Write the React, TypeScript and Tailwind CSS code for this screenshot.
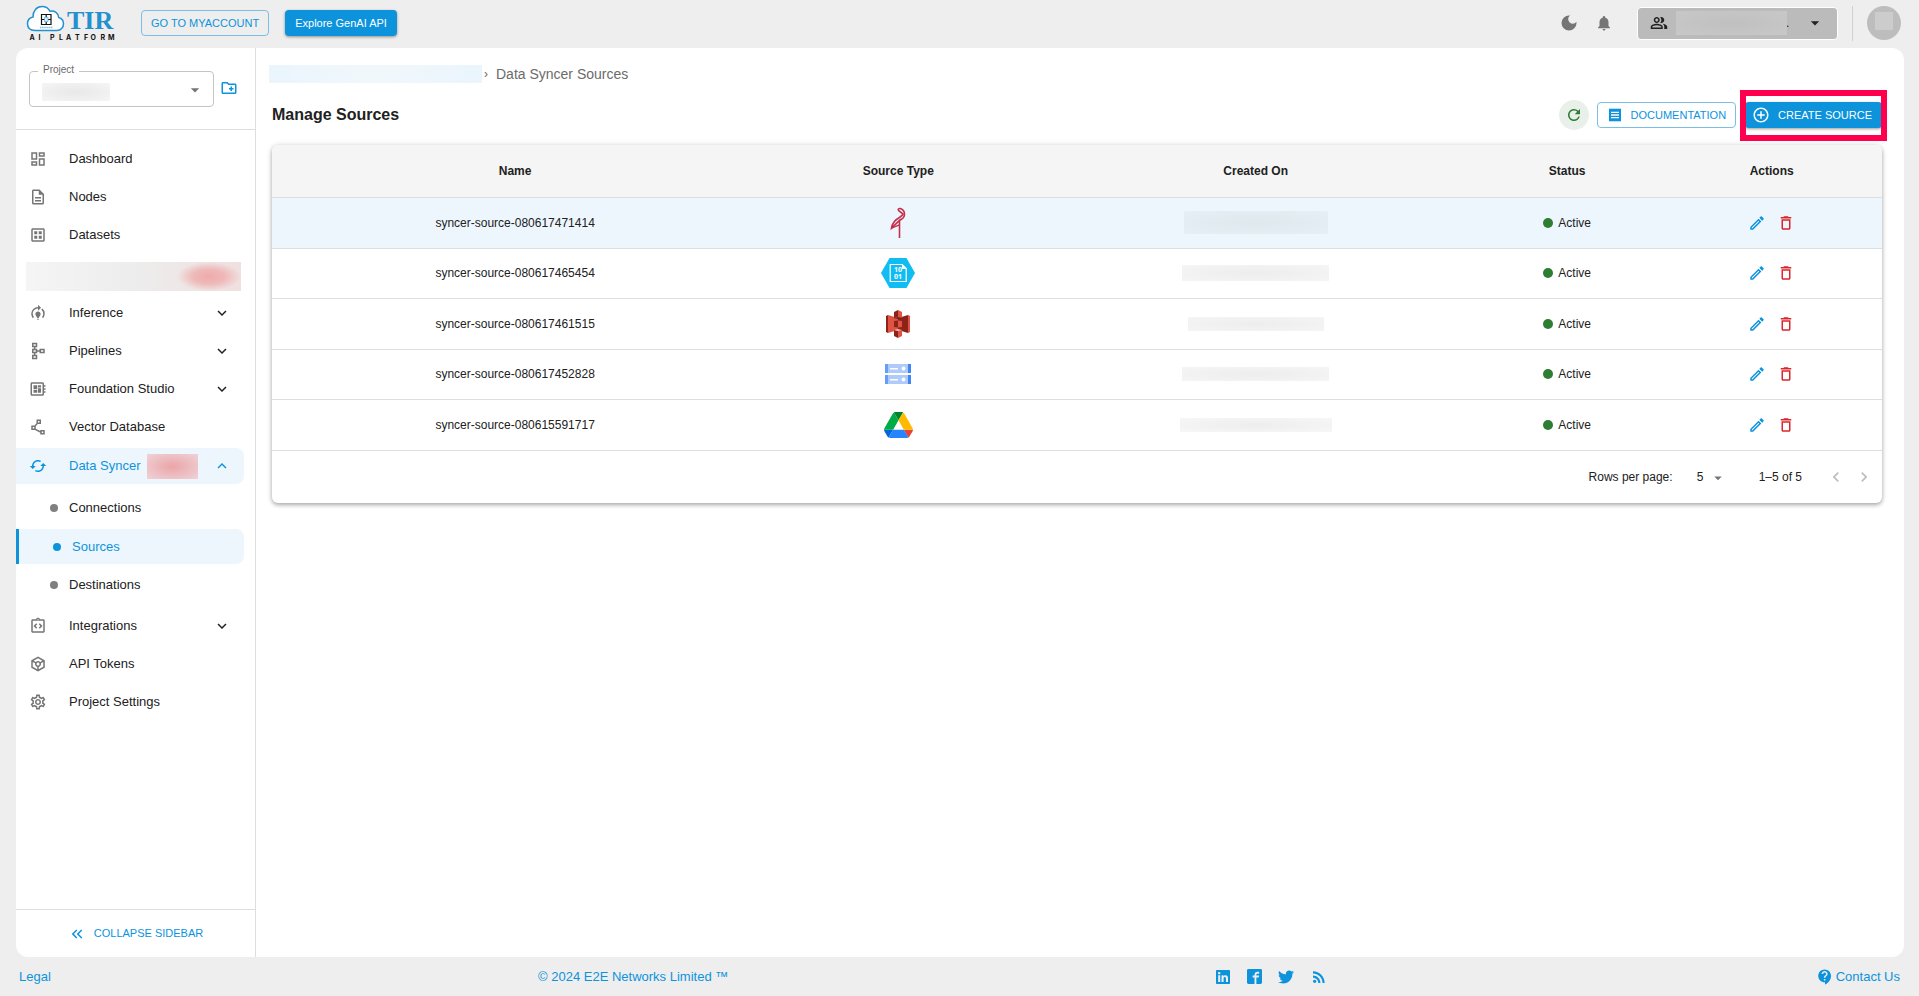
import { useState, type ReactNode } from "react";
import type { IconType } from "react-icons";
import {
    MdAddCircleOutline,
    MdArrowDropDown,
    MdCached,
    MdChevronLeft,
    MdChevronRight,
    MdContactSupport,
    MdDarkMode,
    MdDeleteOutline,
    MdExpandLess,
    MdExpandMore,
    MdKeyboardDoubleArrowLeft,
    MdNotifications,
    MdOutlineCreateNewFolder,
    MdOutlineDashboard,
    MdOutlineDataset,
    MdOutlineDescription,
    MdOutlineDeveloperBoard,
    MdOutlineEdit,
    MdOutlineIntegrationInstructions,
    MdOutlineModelTraining,
    MdOutlinePeopleAlt,
    MdOutlinePolyline,
    MdOutlineSchema,
    MdOutlineSettings,
    MdOutlineToken,
    MdReceipt,
    MdRefresh,
    MdRssFeed,
} from "react-icons/md";
import { FaLinkedin, FaTwitter } from "react-icons/fa";
import { ImFacebook2 } from "react-icons/im";

function Logo() {
    return (
        <svg viewBox="0 0 90 36" className="h-9 w-[90px]" role="img" aria-label="TIR AI Platform">
            <path
                d="M9 25.500C4 25.500 1.500 22.500 1.500 18.500c0-3.500 2.400-6 5.500-6.600C7 6 10.500 1.500 16 1.500c4 0 6.500 1.800 8 4.800 4.500-1 8.500 1.700 8.700 6.200 3 .8 4.800 3.200 4.800 6.300 0 3.700-2.600 6.700-6.500 6.700z"
                fill="#fff"
                stroke="#2490cf"
                strokeWidth="1.500"
            />
            <g fill="none" stroke="#111" strokeWidth="1.200">
                <path d="M15.500 9.500H25v10h-9.500zM15.500 14.500H25M20.200 9.500v3M20.200 16.500v3" />
            </g>
            <path d="M18.500 12.300H22v4.400h-3.500z" fill="#d8eefb" stroke="#5aaede" strokeWidth=".8" />
            <path d="M14 22.500h13" stroke="#7dbce2" strokeWidth="1.500" strokeDasharray="1.500 .6" />
            <text x="41" y="24" fontFamily="Liberation Serif, serif" fontWeight="700" fontSize="26" fill="#2490cf">
                TIR
            </text>
            <text
                x="3.500 12.500 24 33 40 49 58 64.500 74.500 82"
                y="35"
                fontFamily="Inter, sans-serif"
                fontWeight="700"
                fontSize="7"
                fill="#111"
            >
                AIPLATFORM
            </text>
        </svg>
    );
}

function MinioIcon() {
    return (
        <svg viewBox="0 0 16 32" className="h-8 w-4" fill="none" stroke="#c5304c" strokeWidth="1.600">
            <path d="M9.500 31V13.500L1.500 21.200c.6-4.200 3.500-8.400 8-10.700l2.900-2.300C13.300 7.300 12.500 6.500 11.700 6L8.700 3.700C7.500 2.500 8.700 1.200 10.300 1.600c2.600.8 4.300 3.600 4.200 6.200-.1 2.700-2.200 4.300-5 5.700" />
            <path d="M1.500 21.200l8-3.400" strokeWidth="1.300" />
        </svg>
    );
}

function AzureBlobIcon() {
    return (
        <svg viewBox="0 0 34 30" className="h-[30px] w-[34px]">
            <path d="M8.500 0h17L34 15l-8.500 15h-17L0 15z" fill="#0fbdf2" />
            <path d="M9.200 6.500h12l4 4v13H9.200z" fill="none" stroke="#fff" strokeWidth="1.200" />
            <path d="M21 6v5h5z" fill="#fff" />
            <text x="13" y="13.500" fontSize="7" fontWeight="700" fontFamily="Open Sans, sans-serif" fill="#fff">
                10
            </text>
            <text x="13" y="21" fontSize="7" fontWeight="700" fontFamily="Open Sans, sans-serif" fill="#fff">
                01
            </text>
        </svg>
    );
}

function S3Icon() {
    return (
        <svg viewBox="0 0 24 28" className="h-7 w-6">
            <path d="M0 6l2-1v18l-2-1z" fill="#8c2318" />
            <path d="M2 5l10 3v12L2 23z" fill="#e05243" />
            <path d="M24 6l-2-1v18l2-1z" fill="#e05243" />
            <path d="M22 5L12 8v12l10 3z" fill="#8c2318" />
            <path d="M12 0L8 2v6l4-1z" fill="#8c2318" />
            <path d="M12 0l4 2v6l-4-1z" fill="#e05243" />
            <path d="M8 8l4-1 4 1-4 1z" fill="#5e1f18" />
            <path d="M12 28l-4-2v-6l4 1z" fill="#8c2318" />
            <path d="M12 28l4-2v-6l-4 1z" fill="#e05243" />
            <path d="M8 20l4 1 4-1-4-1z" fill="#f2b0a9" />
            <path d="M8 11l4-.6v7.200L8 17z" fill="#8c2318" />
            <path d="M16 11l-4-.6v7.200l4-.6z" fill="#e05243" />
        </svg>
    );
}

function FilestoreIcon() {
    return (
        <svg viewBox="0 0 26 22" className="h-[22px] w-[26px]">
            {[1, 12].map((y) => (
                <g key={y}>
                    <path d={`M0 ${y}h26v9h-26z`} fill="#aecbfa" />
                    <path d={`M0 ${y}h3v9h-3z`} fill="#669df6" />
                    <path d={`M23 ${y}h3v9h-3z`} fill="#4285f4" />
                    <path d={`M5 ${y + 4}h8v1.500h-8z`} fill="#fff" />
                    <circle cx="18.500" cy={y + 4.5} r="1.900" fill="#fff" />
                </g>
            ))}
        </svg>
    );
}

function DriveIcon() {
    return (
        <svg viewBox="0 0 87.3 78" className="h-[26px] w-[29px]">
            <path d="m6.600 66.850 3.850 6.650c.8 1.400 1.950 2.500 3.300 3.300l13.750-23.800h-27.500c0 1.550.4 3.100 1.200 4.500z" fill="#0066da" />
            <path d="m43.650 25-13.750-23.800c-1.350.8-2.500 1.900-3.300 3.300l-25.400 44a9.060 9.060 0 0 0 -1.200 4.500h27.500z" fill="#00ac47" />
            <path d="m73.550 76.800c1.350-.8 2.500-1.900 3.300-3.300l1.600-2.750 7.650-13.250c.8-1.400 1.200-2.950 1.200-4.500h-27.502l5.852 11.500z" fill="#ea4335" />
            <path d="m43.650 25 13.750-23.800c-1.350-.8-2.900-1.200-4.500-1.200h-18.500c-1.600 0-3.150.45-4.500 1.200z" fill="#00832d" />
            <path d="m59.800 53h-32.300l-13.750 23.800c1.350.8 2.900 1.200 4.500 1.200h50.800c1.600 0 3.150-.45 4.500-1.200z" fill="#2684fc" />
            <path d="m73.400 26.500-12.700-22c-.8-1.400-1.950-2.500-3.300-3.300l-13.750 23.800 16.150 28h27.450c0-1.550-.4-3.100-1.200-4.500z" fill="#ffba00" />
        </svg>
    );
}

const sources = [
    { name: "syncer-source-080617471414", icon: <MinioIcon />, blob: "h-[23px] w-36 from-[#dfe8ed] to-[#e6eff5]" },
    { name: "syncer-source-080617465454", icon: <AzureBlobIcon />, blob: "h-4 w-[147px] from-[#ededed] to-[#f5f5f5]" },
    { name: "syncer-source-080617461515", icon: <S3Icon />, blob: "h-3.5 w-[136px] from-[#ededed] to-[#f5f5f5]" },
    { name: "syncer-source-080617452828", icon: <FilestoreIcon />, blob: "h-3.5 w-[147px] from-[#ededed] to-[#f5f5f5]" },
    { name: "syncer-source-080615591717", icon: <DriveIcon />, blob: "h-3.5 w-[152px] from-[#ededed] to-[#f7f7f7]" },
];

type NavItemProps = {
    icon: IconType;
    label: string;
    open?: boolean;
    expandable?: boolean;
    children?: ReactNode;
};

function NavItem({ icon: Icon, label, open, expandable, children }: NavItemProps) {
    const inner = (
        <>
            <Icon className={`size-[18px] shrink-0 ${open ? "" : "text-[#757575]"}`} />
            <span className="ml-[22px]">{label}</span>
            {children}
            {expandable && (open ? <MdExpandLess className="ml-auto size-[18px]" /> : <MdExpandMore className="ml-auto size-[18px]" />)}
        </>
    );
    if (expandable) {
        return (
            <button
                type="button"
                aria-expanded={!!open}
                className={`flex w-full items-center rounded-r-lg px-[13px] text-left ${open ? "my-0.5 h-9 bg-[#edf6fd] text-[#0c93dc]" : "h-[38px]"}`}
            >
                {inner}
            </button>
        );
    }
    return (
        <a href="#" className="flex h-[38px] items-center rounded-r-lg px-[13px]">
            {inner}
        </a>
    );
}

function SubItem({ label, active }: { label: string; active?: boolean }) {
    return (
        <a
            href="#"
            className={`flex items-center rounded-r-lg pl-[34px] ${active ? "my-0.5 h-[35px] border-l-3 border-[#0c93dc] bg-[#edf6fd] text-[#0c93dc]" : "h-[38px]"}`}
        >
            <span className={`size-2 rounded-full ${active ? "bg-[#0c93dc]" : "bg-[#808080]"}`} />
            <span className="ml-[11px]">{label}</span>
        </a>
    );
}

function Sidebar() {
    return (
        <aside className="flex w-60 shrink-0 flex-col border-r border-[#dedede]">
            <div className="flex h-[82px] items-start border-b border-[#dedede] pt-[23px] pl-[13px]">
                <div className="relative h-9 w-[185px] rounded border border-[#c4c4c4]">
                    <label htmlFor="project" className="absolute -top-2 left-2 bg-white px-[5px] text-[10px] leading-3 text-[#6b6b6b]">
                        Project
                    </label>
                    <select id="project" className="h-full w-full appearance-none bg-transparent outline-none">
                        <option value="" />
                    </select>
                    <span className="pointer-events-none absolute top-[11px] left-3 h-[18px] w-[68px] bg-radial from-[#e8e8e8] to-[#f5f5f5]" />
                    <MdArrowDropDown className="pointer-events-none absolute top-2 right-2 size-5 text-[#757575]" />
                </div>
                <button type="button" aria-label="Create project" className="mt-2 ml-1.5 text-[#0c93dc]">
                    <MdOutlineCreateNewFolder className="size-[18px]" />
                </button>
            </div>

            <nav className="flex flex-col pt-2.5 pr-[11px] text-[13px]">
                <NavItem icon={MdOutlineDashboard} label="Dashboard" />
                <NavItem icon={MdOutlineDescription} label="Nodes" />
                <NavItem icon={MdOutlineDataset} label="Datasets" />
                <div className="mt-2 mr-[3px] mb-[3px] ml-2.5 flex h-[29px] bg-linear-to-r from-[#f5f5f5] via-[#ededed] to-[#f0e0e0]">
                    <div className="ml-auto w-16 bg-radial-[closest-side] from-[#efabab] via-[#efb9b9] to-transparent" />
                </div>
                <NavItem icon={MdOutlineModelTraining} label="Inference" expandable />
                <NavItem icon={MdOutlineSchema} label="Pipelines" expandable />
                <NavItem icon={MdOutlineDeveloperBoard} label="Foundation Studio" expandable />
                <NavItem icon={MdOutlinePolyline} label="Vector Database" />
                <NavItem icon={MdCached} label="Data Syncer" expandable open>
                    <span className="ml-1.5 h-[25px] w-[51px] bg-radial from-[#eaa5a8] to-[#eed3d8]" />
                </NavItem>
                <div className="my-[3px]">
                    <SubItem label="Connections" />
                    <SubItem label="Sources" active />
                    <SubItem label="Destinations" />
                </div>
                <NavItem icon={MdOutlineIntegrationInstructions} label="Integrations" expandable />
                <NavItem icon={MdOutlineToken} label="API Tokens" />
                <NavItem icon={MdOutlineSettings} label="Project Settings" />
            </nav>

            <button
                type="button"
                className="mt-auto flex h-12 items-center justify-center gap-2 border-t border-[#dedede] text-[11px] text-[#0c93dc]"
            >
                <MdKeyboardDoubleArrowLeft className="size-[18px]" />
                COLLAPSE SIDEBAR
            </button>
        </aside>
    );
}

function SourcesTable() {
    const [rows, setRows] = useState("5");

    return (
        <div className="mt-[15px] overflow-hidden rounded-md shadow-[0_2px_4px_rgba(0,0,0,0.3),0_0_6px_rgba(0,0,0,0.1)]">
            <table className="w-full table-fixed text-center text-xs">
                <thead className="bg-[#f5f5f5]">
                    <tr className="h-[52px] border-b border-[#dedede]">
                        <th className="w-[30.2%]">Name</th>
                        <th className="w-[17.4%]">Source Type</th>
                        <th className="w-[27%]">Created On</th>
                        <th className="w-[11.7%]">Status</th>
                        <th className="w-[13.7%]">Actions</th>
                    </tr>
                </thead>
                <tbody>
                    {sources.map((source) => (
                        <tr key={source.name} className="border-b border-[#dedede] first:bg-[#edf6fd] odd:h-[51px] even:h-[50px]">
                            <td>{source.name}</td>
                            <td>
                                <div className="flex justify-center">{source.icon}</div>
                            </td>
                            <td>
                                <div className={`mx-auto bg-radial ${source.blob}`} />
                            </td>
                            <td>
                                <div className="flex items-center justify-center gap-[5px]">
                                    <span className="size-2.5 rounded-full bg-[#2e7d32]" />
                                    Active
                                </div>
                            </td>
                            <td>
                                <div className="flex items-center justify-center gap-[11px]">
                                    <button type="button" aria-label={`Edit ${source.name}`} className="text-[#0c93dc]">
                                        <MdOutlineEdit className="size-[18px]" />
                                    </button>
                                    <button type="button" aria-label={`Delete ${source.name}`} className="text-[#d9262b]">
                                        <MdDeleteOutline className="size-[18px]" />
                                    </button>
                                </div>
                            </td>
                        </tr>
                    ))}
                </tbody>
            </table>

            <div className="flex h-[52px] items-center justify-end pr-2 text-xs">
                <label htmlFor="rows">Rows per page:</label>
                <div className="relative ml-[18px]">
                    <select
                        id="rows"
                        value={rows}
                        onChange={(e) => setRows(e.target.value)}
                        className="w-9 appearance-none bg-transparent pl-1.5 outline-none"
                    >
                        <option>5</option>
                        <option>10</option>
                        <option>25</option>
                    </select>
                    <MdArrowDropDown className="pointer-events-none absolute top-0 right-0 size-[18px] text-[#757575]" />
                </div>
                <span className="ml-8">1–5 of 5</span>
                <button type="button" aria-label="Previous page" disabled className="ml-6 text-[#bdbdbd]">
                    <MdChevronLeft className="size-5" />
                </button>
                <button type="button" aria-label="Next page" disabled className="ml-2 text-[#bdbdbd]">
                    <MdChevronRight className="size-5" />
                </button>
            </div>
        </div>
    );
}

export default function App() {
    return (
        <div className="flex min-h-screen flex-col bg-[#eeeeee] font-['Liberation_Sans',Arial,sans-serif] text-[#212121]">
            <header className="flex h-12 items-center pr-[18px] pb-0.5 pl-[26px]">
                <Logo />
                <button type="button" className="ml-[25px] h-[26px] rounded border border-[#79bfe8] px-[9px] text-[11px] text-[#0c93dc]">
                    GO TO MYACCOUNT
                </button>
                <button type="button" className="ml-4 h-[26px] rounded bg-[#0c93dc] px-2.5 text-[11px] text-white shadow-[0_1px_3px_rgba(0,0,0,0.4)]">
                    Explore GenAI API
                </button>

                <div className="ml-auto flex items-center">
                    <button type="button" aria-label="Dark mode" className="text-[#757575]">
                        <MdDarkMode className="size-5" />
                    </button>
                    <button type="button" aria-label="Notifications" className="ml-4 text-[#757575]">
                        <MdNotifications className="size-[18px]" />
                    </button>
                    <div className="relative ml-6 flex h-[33px] w-[201px] items-center rounded border border-white bg-[#bbbbbb]">
                        <select aria-label="Account" className="h-full w-full appearance-none bg-transparent pl-[148px] text-xs outline-none">
                            <option>.</option>
                        </select>
                        <MdOutlinePeopleAlt className="pointer-events-none absolute left-3 size-[18px]" />
                        <span className="pointer-events-none absolute left-[38px] h-6 w-[111px] bg-radial from-[#c0c0c0] to-[#c8c8c8]" />
                        <MdArrowDropDown className="pointer-events-none absolute right-3 size-5" />
                    </div>
                    <div className="ml-3.5 h-[35px] w-px bg-[#d0d0d0]" />
                    <button type="button" aria-label="Profile" className="ml-3.5 flex size-[34px] items-center justify-center rounded-full bg-[#bdbdbd]">
                        <span className="mb-1 size-[18px] bg-[#cccccc]" />
                    </button>
                </div>
            </header>

            <div className="mr-[15px] ml-4 flex flex-1 overflow-hidden rounded-xl bg-white">
                <Sidebar />

                <main className="min-w-0 flex-1 pt-4 pr-[22px] pl-4">
                    <nav aria-label="Breadcrumb" className="-ml-[3px] flex h-5 items-center text-sm text-[#6b6b6b]">
                        <span className="h-[18px] w-[213px] bg-linear-to-r from-[#eaf5fc] via-[#f1f8fc] to-[#eaf5fc]" />
                        <span className="ml-0.5 text-xs">›</span>
                        <span className="ml-2">Data Syncer Sources</span>
                    </nav>

                    <div className="mt-4 flex h-[30px] items-center">
                        <h1 className="font-bold">Manage Sources</h1>
                        <button
                            type="button"
                            aria-label="Refresh"
                            className="ml-auto flex size-[30px] items-center justify-center rounded-full bg-[#e9f0ea] text-[#2e7d32]"
                        >
                            <MdRefresh className="size-[18px]" />
                        </button>
                        <a href="#" className="ml-2 flex h-[26px] items-center gap-2 rounded border border-[#79bfe8] px-[9px] text-[11px] text-[#0c93dc]">
                            <MdReceipt className="size-4" />
                            DOCUMENTATION
                        </a>
                        <div className="relative ml-[9px]">
                            <button
                                type="button"
                                className="flex h-[26px] items-center gap-2 rounded bg-[#0c93dc] pr-2.5 pl-[7px] text-[11px] text-white shadow-[0_1px_3px_rgba(0,0,0,0.4)]"
                            >
                                <MdAddCircleOutline className="size-[18px]" />
                                CREATE SOURCE
                            </button>
                            <span className="pointer-events-none absolute -inset-x-[5px] -top-3 -bottom-[13px] border-6 border-[#ff004f]" />
                        </div>
                    </div>

                    <SourcesTable />
                </main>
            </div>

            <footer className="flex h-[39px] items-center justify-between px-[19px] text-[13px] text-[#0c93dc]">
                <a href="#">Legal</a>
                <a href="#">© 2024 E2E Networks Limited ™</a>
                <div className="flex items-center gap-4">
                    <a href="#" aria-label="LinkedIn">
                        <FaLinkedin className="size-4" />
                    </a>
                    <a href="#" aria-label="Facebook">
                        <ImFacebook2 className="size-[15px]" />
                    </a>
                    <a href="#" aria-label="Twitter">
                        <FaTwitter className="size-4" />
                    </a>
                    <a href="#" aria-label="RSS">
                        <MdRssFeed className="size-[18px]" />
                    </a>
                </div>
                <a href="#" className="flex items-center gap-0.5">
                    <MdContactSupport className="size-[18px]" />
                    Contact Us
                </a>
            </footer>
        </div>
    );
}
